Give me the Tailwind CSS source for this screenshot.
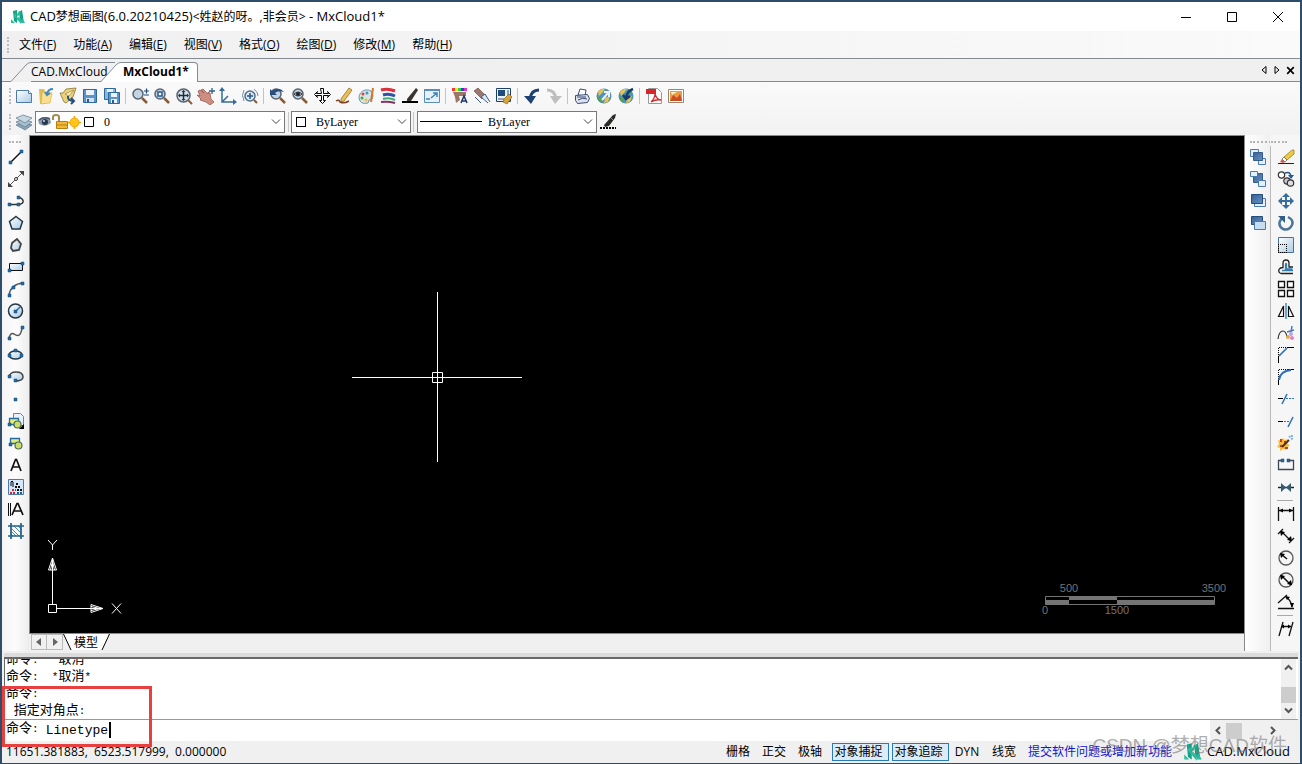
<!DOCTYPE html>
<html lang="zh-CN">
<head>
    <meta charset="UTF-8">
    <meta name="viewport" content="width=device-width, initial-scale=1.0">
    <title>CAD梦想画图 - MxCloud1</title>
    <script src="https://cdn.jsdelivr.net/npm/@tailwindcss/browser@4"></script>
</head>
<body class="h-screen flex flex-col relative overflow-hidden bg-[#f0f0f0] border-x-2 border-t-2 border-b border-[#2f4d68] font-['Open_Sans','Noto_Sans_CJK_SC',sans-serif] text-xs text-black">
    <!-- Shared gradients -->
    <svg class="absolute size-0" aria-hidden="true">
        <defs>
            <linearGradient id="sky" x1="0" y1="0" x2="1" y2="1"><stop offset="0" stop-color="#fff"/><stop offset="1" stop-color="#a9cbe6"/></linearGradient>
            <linearGradient id="navy" x1="0" y1="0" x2="1" y2="1"><stop offset="0" stop-color="#3a6095"/><stop offset="1" stop-color="#6591c4"/></linearGradient>
        </defs>
    </svg>

    <!-- Title bar -->
    <header class="h-[29px] shrink-0 bg-white flex items-center pl-2">
        <svg class="size-4 mr-1" viewBox="0 0 16 16"><path fill="#16a085" d="M3 2l4-1v13l-3-2zM9 3l3-2 2 13-4-2z"/><path fill="#2bbf9f" d="M5 4l6 7v4L4 7zM1 10l4 4H1zM9 2l-3 5 1 2 4-6zM12 9l3 5h-4z"/></svg>
        <h1 class="whitespace-pre leading-4"><span class="text-[13px]">CAD</span>梦想画图<span class="text-[13px]">(6.0.20210425)</span>&lt;姓赵的呀。,非会员&gt;<span class="text-[13px]"> - MxCloud1*</span></h1>
        <div class="ml-auto flex -mr-px">
            <button aria-label="最小化" class="w-[46px] h-7 flex items-center justify-center"><svg class="size-3" viewBox="0 0 12 12"><path stroke="#000" d="M1 6.500h10"/></svg></button>
            <button aria-label="最大化" class="w-[46px] h-7 flex items-center justify-center"><svg class="size-3" viewBox="0 0 12 12"><path fill="none" stroke="#000" d="M1.500 1.500h9v9h-9z"/></svg></button>
            <button aria-label="关闭" class="w-[46px] h-7 flex items-center justify-center"><svg class="size-3" viewBox="0 0 12 12"><path stroke="#000" d="M1 1l10 10M11 1L1 11"/></svg></button>
        </div>
    </header>

    <!-- Menu -->
    <nav class="h-7 shrink-0 flex items-center gap-[17px] pl-[5px] bg-linear-to-r from-[#f0f0f0] to-[#fafafa] border-b border-[#848b93]">
        <span class="h-4 border-l-2 border-dotted border-[#bdbdbd] -mr-[7px]"></span>
        <button>文件(<u>F</u>)</button>
        <button>功能(<u>A</u>)</button>
        <button>编辑(<u>E</u>)</button>
        <button>视图(<u>V</u>)</button>
        <button>格式(<u>O</u>)</button>
        <button>绘图(<u>D</u>)</button>
        <button>修改(<u>M</u>)</button>
        <button>帮助(<u>H</u>)</button>
    </nav>

    <!-- Document tabs -->
    <div class="h-[23px] shrink-0 flex items-end" role="tablist">
        <span class="w-[9px] border-b border-[#848b93]"></span>
        <button role="tab" class="flex h-5">
            <svg class="w-5 h-5" viewBox="0 0 20 20"><path fill="none" stroke="#848b93" d="M0 19.500L15 3Q17 .5 20 .5"/></svg>
            <span class="h-5 w-[84px] text-left whitespace-nowrap leading-[18px] border-y border-[#848b93]">CAD.MxCloud</span>
        </button>
        <button role="tab" aria-selected="true" class="flex h-5 -ml-[14px] relative">
            <svg class="w-5 h-5" viewBox="0 0 20 20"><path fill="#fff" d="M0 20L15 3Q17 .5 20 .5V20z"/><path fill="none" stroke="#848b93" d="M0 19.500L15 3Q17 .5 20 .5"/></svg>
            <span class="h-5 w-[77px] pl-[2px] text-left whitespace-nowrap leading-[18px] font-bold bg-white border-t border-r rounded-tr-sm border-[#848b93]">MxCloud1*</span>
        </button>
        <div class="flex-1 h-full border-b border-[#848b93] flex items-center justify-end gap-[3px] pr-1">
            <button aria-label="上一个"><svg class="size-[10px]" viewBox="0 0 10 10"><path fill="none" stroke="#000" d="M7 1.500v7L3 5z"/></svg></button>
            <button aria-label="下一个"><svg class="size-[10px]" viewBox="0 0 10 10"><path fill="none" stroke="#000" d="M3 1.500v7L7 5z"/></svg></button>
            <button aria-label="关闭文档"><svg class="size-[11px]" viewBox="0 0 10 10"><path stroke="#000" stroke-width="1.500" d="M2 2l6 6M8 2L2 8"/></svg></button>
        </div>
    </div>

    <!-- Toolbars -->
    <div class="shrink-0 bg-linear-to-b from-[#fafafa] to-[#f2f2f2] pl-[7px] pt-[2px]">
        <div class="flex items-center h-6 pb-px">
            <span class="h-4 border-l-2 border-dotted border-[#bdbdbd] mr-[2px]"></span>
            <div id="mainTools" class="flex items-center"></div>
        </div>
        <div class="flex items-center h-[27px]">
            <span class="h-4 border-l-2 border-dotted border-[#bdbdbd] mr-[2px]"></span>
            <div id="layerTools" class="flex"></div>
            <div class="flex items-center h-[22px] w-[250px] bg-white border border-[#7a7a7a] pl-[2px] pr-[3px]">
                <svg class="w-[61px] h-4 mr-[5px]" viewBox="0 0 61 16">
                    <path fill="#8b9ba8" d="M0 6q5-5 12-2l1 5q-6 5-12 1z"/><circle cx="7" cy="8" r="3" fill="#25394b"/><circle cx="6" cy="7" r="1" fill="#cde"/><path d="M1 6q5-4 11-1" fill="none" stroke="#455868" stroke-width="1.500"/>
                    <path d="M15 6V3q0-2 3-2t3 2v5" fill="none" stroke="#a5894e" stroke-width="2"/><path fill="#f2b733" stroke="#b97d13" d="M18.500 7.500h11v7h-11z"/><path stroke="#b97d13" d="M19 11h10"/>
                    <circle cx="36.500" cy="8.500" r="4.500" fill="#ffc61a" stroke="#f2a20c"/><path stroke="#f2a20c" stroke-width="1.500" d="M36.500 2v2M36.500 13v2M30 8.500h2M41 8.500h2"/>
                    <path fill="#fff" stroke="#000" d="M46.500 3.500h9v9h-9z"/>
                </svg>
                <select aria-label="图层" class="flex-1 appearance-none outline-none font-['Liberation_Serif','Noto_Sans_CJK_SC',serif]"><option>0</option></select>
                <svg class="w-[10px] h-[6px]" viewBox="0 0 10 6"><path fill="none" stroke="#444" d="M1 .5l4 4 4-4"/></svg>
            </div>
            <span class="w-px h-5 bg-[#c8c8c8] ml-[3px] mr-[2px]"></span>
            <div class="flex items-center h-[22px] w-[120px] bg-white border border-[#7a7a7a] pl-1 pr-[3px]">
                <span class="size-[10px] border border-black mr-[10px]"></span>
                <select aria-label="颜色" class="flex-1 appearance-none outline-none font-['Liberation_Serif','Noto_Sans_CJK_SC',serif]"><option>ByLayer</option></select>
                <svg class="w-[10px] h-[6px]" viewBox="0 0 10 6"><path fill="none" stroke="#444" d="M1 .5l4 4 4-4"/></svg>
            </div>
            <span class="w-px h-5 bg-[#c8c8c8] ml-[2px] mr-[3px]"></span>
            <div class="flex items-center h-[22px] w-[180px] bg-white border border-[#7a7a7a] pl-[2px] pr-[3px]">
                <span class="w-[62px] h-px bg-black mr-[6px]"></span>
                <select aria-label="线型" class="flex-1 appearance-none outline-none font-['Liberation_Serif','Noto_Sans_CJK_SC',serif]"><option>ByLayer</option></select>
                <svg class="w-[10px] h-[6px]" viewBox="0 0 10 6"><path fill="none" stroke="#444" d="M1 .5l4 4 4-4"/></svg>
            </div>
            <div id="styleTools" class="flex"></div>
        </div>
    </div>

    <!-- Workspace -->
    <div class="flex-1 min-h-0 flex">
        <div class="w-[27px] shrink-0 pl-[3px] pt-[6px] bg-linear-to-r from-[#f4f4f4] via-[#fcfcfc] to-[#ededed]">
            <span class="block w-3 ml-1 border-t-2 border-dotted border-[#b5b5b5] mb-[3px]"></span>
            <div id="drawTools"></div>
        </div>
        <div class="flex-1 min-w-0 flex flex-col">
            <main class="flex-1 relative bg-black border-y border-l border-[#8a8a8a] overflow-hidden">
                <svg class="absolute left-[322px] top-[156px] size-[170px]" viewBox="0 0 170 170"><path fill="none" stroke="#fff" d="M0 85.500h170M85.500 0v170M80.500 80.500h10v10h-10z"/></svg>
                <svg class="absolute left-[14px] bottom-[19px] w-20 h-[76px]" viewBox="0 0 80 76" fill="none" stroke="#fff">
                    <path d="M4.500 66.500h8v8h-8zM8.500 66V20M13 70.500h46M8.500 20l-4 12h8zM8.500 23l-2 9M8.500 23l2 9M59 70.500l-12-4v8zM56 70.500l-9-2M56 70.500l-9 2"/>
                    <path d="M4 2l4.500 5L13 2M8.500 7v5M68 65.500l9 10M77 65.500l-9 10"/>
                </svg>
                <svg class="absolute right-[18px] bottom-4 w-[186px] h-9 text-[11px] font-['Liberation_Sans',sans-serif]" viewBox="0 0 186 36" fill="#747474" text-anchor="middle">
                    <path fill="none" stroke="#747474" d="M5.500 15.500h169v8h-169z"/><path d="M5 19h24v4H5zM29 15h48v4H29zM77 19h98v4H77z"/>
                    <text x="29" y="11">500</text><text x="174" y="11">3500</text><text x="5" y="33">0</text><text x="77" y="33">1500</text>
                </svg>
            </main>
            <div class="h-[17px] shrink-0 flex text-[12px] leading-[17px]">
                <button aria-label="左移" class="w-4 h-4 border border-[#bbb] flex items-center justify-center ml-[2px]"><svg class="size-2" viewBox="0 0 8 8"><path fill="#666" d="M6 0v8L1 4z"/></svg></button>
                <button aria-label="右移" class="w-4 h-4 border border-l-0 border-[#bbb] flex items-center justify-center"><svg class="size-2" viewBox="0 0 8 8"><path fill="#666" d="M2 0v8l5-4z"/></svg></button>
                <button class="flex h-4"><svg class="w-[11px] h-4" viewBox="0 0 11 16"><path fill="#fff" d="M0 0h11v16H8z"/><path stroke="#000" d="M.5 0L8 16"/></svg><span class="bg-white">模型</span><svg class="w-3 h-4" viewBox="0 0 12 16"><path fill="#fff" d="M0 0h12L4 16H0z"/><path stroke="#000" d="M11.500 0L4 16"/></svg></button>
            </div>
        </div>
        <div class="w-[26px] shrink-0 pt-[6px] flex flex-col items-center border-l border-[#8a8a8a] bg-linear-to-r from-white to-[#f0f0f0]">
            <span class="w-full border-t-2 border-dotted border-[#b5b5b5] ml-[10px] mb-[3px]"></span>
            <div id="orderTools"></div>
        </div>
        <div class="w-[30px] shrink-0 pt-[6px] flex flex-col items-center bg-[#f6f6f6]">
            <span class="w-4 mr-3 border-t-2 border-dotted border-[#b5b5b5] mb-[3px]"></span>
            <div id="modifyTools" class="flex-1 w-full pl-1 border-l border-[#bbb]"></div>
        </div>
    </div>

    <!-- Command history and prompt -->
    <section class="shrink-0 mt-[2px] mx-[2px] border-t-4 border-t-[#dcdcdc] font-['Liberation_Mono','Noto_Sans_CJK_SC',monospace] text-[13px] relative">
        <div class="flex h-[62px] border-t-2 border-l border-[#686868] bg-white">
            <div class="flex-1 overflow-hidden flex flex-col justify-end pl-px leading-[17px] whitespace-pre">
                <p class="h-[17px] shrink-0">命令<span class="text-[11px]">:  *</span>取消<span class="text-[11px]">*</span></p>
                <p class="h-[17px] shrink-0">命令<span class="text-[11px]">:  *</span>取消<span class="text-[11px]">*</span></p>
                <p class="h-[17px] shrink-0">命令<span class="text-[11px]">:</span></p>
                <p class="h-[17px] shrink-0"> 指定对角点<span class="text-[11px]">:</span></p>
            </div>
            <div class="w-[15px] bg-[#f0f0f0] flex flex-col items-center justify-between py-[5px] mr-[2px]">
                <svg class="w-[9px] h-[7px]" viewBox="0 0 9 7"><path fill="none" stroke="#555" stroke-width="2" d="M1 5.500L4.500 2 8 5.500"/></svg>
                <span class="w-full h-4 bg-[#cdcdcd] mt-3"></span>
                <svg class="w-[9px] h-[7px]" viewBox="0 0 9 7"><path fill="none" stroke="#555" stroke-width="2" d="M1 1.500L4.500 5 8 1.500"/></svg>
            </div>
        </div>
        <div class="flex h-[22px] border-t border-l border-[#9a9a9a] bg-white">
            <label for="command" class="pl-px leading-[17px]">命令<span class="text-[11px]">:</span></label>
            <input id="command" type="text" value="Linetype" class="field-sizing-content ml-[7px] outline-none text-[13px] leading-[19px]">
            <span class="w-[2px] h-4 mt-[2px] ml-px bg-black"></span>
            <div class="ml-auto w-[71px] flex items-center justify-between bg-[#f0f0f0] px-[5px]">
                <svg class="w-[6px] h-[9px]" viewBox="0 0 6 9"><path fill="none" stroke="#555" stroke-width="2" d="M5 1L1.500 4.500 5 8"/></svg>
                <span class="w-4 h-4 bg-[#cdcdcd] mr-6"></span>
                <svg class="w-[6px] h-[9px]" viewBox="0 0 6 9"><path fill="none" stroke="#555" stroke-width="2" d="M1 1l3.500 3.500L1 8"/></svg>
            </div>
            <span class="w-[17px] bg-[#f0f0f0]"></span>
        </div>
        <!-- Highlight frame -->
        <div class="absolute -left-[2px] top-[29px] w-[150px] h-[61px] border-3 border-[#e8403e] pointer-events-none"></div>
    </section>

    <!-- Status bar -->
    <footer class="h-[22px] shrink-0 flex items-center pl-1 pr-[10px] whitespace-nowrap">
        <output class="whitespace-pre">11651.381883,  6523.517999,  0.000000</output>
        <div class="ml-auto flex items-center">
            <button class="w-9">栅格</button>
            <button class="w-9">正交</button>
            <button class="w-9">极轴</button>
            <button aria-pressed="true" class="w-[57px] h-[18px] leading-[16px] pr-1 ml-1 border border-[#2a7ab8] bg-[#dcebf8]">对象捕捉</button>
            <button aria-pressed="true" class="w-[57px] h-[18px] leading-[16px] pr-1 ml-[3px] border border-[#2a7ab8] bg-[#dcebf8]">对象追踪</button>
            <button class="w-9">DYN</button>
            <button class="w-9 ml-px">线宽</button>
            <a href="#" class="ml-[6px] text-[#1414d2]">提交软件问题或增加新功能</a>
            <svg class="size-5 ml-[11px] mr-1" viewBox="0 0 16 16"><path fill="#16a085" d="M3 2l4-1v13l-3-2zM9 3l3-2 2 13-4-2z"/><path fill="#2bbf9f" d="M5 4l6 7v4L4 7zM1 10l4 4H1zM9 2l-3 5 1 2 4-6zM12 9l3 5h-4z"/></svg>
            <span class="text-[13px]">CAD.MxCloud</span>
        </div>
    </footer>
    <p class="absolute right-[13px] bottom-1 text-[19px] leading-[26px] text-[#777]/60 whitespace-nowrap pointer-events-none font-['Liberation_Sans','Noto_Sans_CJK_SC',sans-serif]">CSDN @梦想CAD软件</p>

    <script>
        // Each entry is [title, svg body on an 18x18 grid]; null draws a separator
        const lens = '<circle cx="7" cy="7" r="5" fill="#c3d5e4" stroke="#566473" stroke-width="1.500"/><path stroke="#8a5a33" stroke-width="2.500" d="M11 11l5 5"/>';
        const globe = '<circle cx="9" cy="9" r="7.500" fill="#4e94b8"/><path fill="#e6c34d" d="M3 5q3-4 7-3l-3 4-3 3zM10 11l5-2-2 6-4 1z"/><path fill="#5a9c55" d="M2 9l4 2 1 5q-4-1-5-7zM11 2l4 3-3 2z"/>';
        const floppy = '<path fill="#5c93c8" stroke="#2f689f" d="M2.500 2.500h13v13h-13z"/><path fill="#eaf3fb" d="M5 3h8v5H5z"/><path fill="#d2e1ee" d="M5 11h8v4H5z"/><path fill="#285a90" d="M6 12h2v3H6z"/>';

        const mainTools = [
            ["新建", '<path fill="url(#sky)" stroke="#4d7ba6" d="M1.500 3.500h12l3 3v9h-15z"/><path fill="#fff" stroke="#4d7ba6" d="M13.500 3.500v3h3"/>'],
            ["打开", '<path fill="#e2bd55" d="M2 2h5l1 2v13H3z"/><path fill="#f9df8e" stroke="#d1a63f" stroke-width=".6" d="M5 5l10 1-2 10-9 1z"/><path fill="none" stroke="#4389bd" stroke-width="2" d="M16 2q-5 0-6 5M8 5l2 3 3-2"/>'],
            ["打开云图", '<path fill="#ecd17b" stroke="#8b7433" stroke-width=".8" d="M1 6h3l3-4 10-1-3 9-7 6-2-1z"/><path fill="#fff3c4" stroke="#8b7433" stroke-width=".6" d="M6 7l9-4-5 6z"/><path fill="none" stroke="#244f79" stroke-width="2" d="M9 9q-1 5 6 5M12 11l3 3-3 3"/>'],
            ["保存", floppy],
            ["另存为", '<path fill="#8ab5dc" stroke="#2f689f" d="M1.500 1.500h11v11h-11z"/><path fill="#eaf3fb" d="M4 2h6v3H4z"/><path fill="#5c93c8" stroke="#2f689f" d="M5.500 5.500h11v11h-11z"/><path fill="#eaf3fb" d="M8 6h6v4H8zM8 12h6v4H8z"/><path fill="#285a90" d="M9 13h2v3H9z"/>'],
            null,
            ["缩放", lens + '<path stroke="#1e4b78" stroke-width="1.200" d="M13 4h5M15.500 1.500v5M13 8h5"/>'],
            ["窗口缩放", lens + '<path fill="#fff" stroke="#27588b" stroke-width="1.500" d="M5 5h4v4H5z"/>'],
            ["范围缩放", '<circle cx="8.500" cy="8.500" r="6.500" fill="#d5e1ea" stroke="#566473" stroke-width="1.500"/><path stroke="#8a5a33" stroke-width="2" d="M13 13l4 4"/><path stroke="#1d2d3c" stroke-width="1.500" d="M4 8.500h9M8.500 4v9"/><path fill="#1d2d3c" d="M3 8.500l2-2v4zM14 8.500l-2-2v4zM8.500 3l-2 2h4zM8.500 14l-2-2h4z"/>'],
            ["平移", '<path fill="#cf8d82" stroke="#8b5148" stroke-width=".7" d="M1 4l2-1 4 3-3-3 2-1 5 5 0-2 2 1 1 6 3 3-4 3-4-3-6-2 1-1-4-4 3 1z"/><path stroke="#2d5e8d" stroke-width="1.300" d="M12 4h6M15 1v6"/>'],
            ["坐标系", '<path fill="none" stroke="#396b98" stroke-width="1.500" d="M3 2v13h13M3 15l6-6"/><path fill="#396b98" d="M3 0l3 4H0zM18 15l-4-3v6z"/>'],
            ["实时缩放", '<circle cx="9" cy="9" r="5" fill="#dce9f3" stroke="#4c6f90" stroke-width="1.500"/><path stroke="#27588b" stroke-width="1.500" d="M6 9h6M9 6v6"/><path fill="none" stroke="#7291aa" d="M3 3q-3 5 0 11M13 2q4 3 4 7"/><path stroke="#8a5a33" stroke-width="2" d="M13 13l3 3"/>'],
            null,
            ["上一视图", lens + '<path fill="#294e7d" d="M1 8V2l2 2q7-5 12 1-6-2-9 1l2 2z"/>'],
            ["全部显示", lens + '<circle cx="7" cy="7" r="2" fill="#222"/><path stroke="#333" fill="none" d="M3 7q4-4 8 0-4 4-8 0"/>'],
            ["移动视图", '<path fill="#fff" stroke="#000" d="M7.500 1.500h3v5h5l-1-2 3 3-3 3 1-2h-5v5h2l-3 3-3-3h2v-5h-5l1 2-3-3 3-3-1 2h5z"/>'],
            ["画笔", '<path fill="#edc158" stroke="#966a22" stroke-width=".8" d="M6 12L14 1l3 2-8 11-3 1z"/><path fill="none" stroke="#7b4225" stroke-width="1.500" d="M1 14q3-2 4 1 4 2 9-1"/>'],
            ["调色板", '<path fill="#d9e4e6" stroke="#6b96ae" d="M8 3q8-1 8 6 0 4-4 4l-1 3q-8 2-9-5 0-6 6-8z"/><circle cx="6" cy="7" r="1.500" fill="#d44"/><circle cx="10" cy="6" r="1.500" fill="#49b"/><circle cx="5" cy="11" r="1.500" fill="#4a4"/><circle cx="9" cy="13" r="1.500" fill="#eb3"/><path stroke="#cf7a2b" stroke-width="2" d="M16 1l-2 14"/>'],
            ["图层颜色", '<path stroke="#d7323c" stroke-width="3" d="M2 3q7-2 14 1" fill="none"/><path stroke="#3151a8" stroke-width="3" d="M4 8q6-2 12 1" fill="none"/><path stroke="#3fac7b" stroke-width="2" d="M4 12q6-2 12 1" fill="none"/><path stroke="#8b315f" stroke-width="2" d="M2 15q7-1 14 1" fill="none"/>'],
            ["线宽", '<path fill="#3b332d" d="M6 12L15 1l2 2-7 11-4 2z"/><path stroke="#000" stroke-width="2" d="M1 15h16"/>'],
            ["外部参照", '<path fill="#e7f1fa" stroke="#5a8dbd" d="M1.500 2.500h15v13h-15z"/><path fill="#5a8dbd" d="M1 2h16v2H1z"/><path fill="none" stroke="#3d83bd" stroke-width="1.500" d="M8 11l6-5M10 6h4v4M3 12h4"/>'],
            null,
            ["文字样式", '<path fill="#f33" d="M1 1h3v3H1z"/><path fill="#ee2" d="M4 1h3v3H4z"/><path fill="#3c4" d="M7 1h3v3H7z"/><path fill="#24d" d="M10 1h3v3h-3z"/><path fill="#d3c" d="M13 1h3v3h-3z"/><path fill="#9d7667" d="M2 5h13v4H8l1 4-4 3-1-6z"/><path fill="none" stroke="#1c3864" stroke-width="1.500" d="M10 16l3-7 3 7M11 14h4"/>'],
            ["格式刷", '<path fill="#9c7770" stroke="#6b4a46" stroke-width=".7" d="M1 4l4-3 7 7-3 4z"/><path fill="#dce5ef" stroke="#3a5e85" d="M8 10l4-3 5 8M8 10l7 6"/><path stroke="#3a5e85" d="M2 10l6 6"/>'],
            ["特性", '<path fill="#edf3f8" stroke="#1e4068" d="M1.500 1.500h14v13h-14z"/><path fill="#204b7b" d="M3 3h7v6H3z"/><path fill="#90a6bd" d="M12 3h2v10h-2zM3 11h6v2H3z"/><path fill="#d8a338" stroke="#75521b" stroke-width=".6" d="M9 12l5-5 3 3-5 7-4-2z"/>'],
            null,
            ["撤销", '<path fill="none" stroke="#1f4170" stroke-width="3" d="M16 3Q8 3 7 12"/><path fill="#1f4170" d="M1 9h12l-5 8z"/>'],
            ["重做", '<path fill="none" stroke="#bebebe" stroke-width="3" d="M2 3q8 0 9 9"/><path fill="#bebebe" d="M17 9H5l5 8z"/>'],
            null,
            ["打印", '<path fill="#fff" stroke="#3b4c77" d="M5 8l2-6 6 1-1 6z"/><path fill="#dce1ec" stroke="#3b4c77" d="M2.500 8.500l12-1 2 4-2 4-10 1-2-3z"/><path fill="none" stroke="#3b4c77" d="M5 13q5-3 9-1M4 10h9"/>'],
            ["网上发布", globe + '<path fill="none" stroke="#eef" stroke-width="2" d="M7 13l6-7M9 5h5v5"/>'],
            ["网上打开", globe + '<path fill="none" stroke="#163d68" stroke-width="2.500" d="M16 2q-6 2-7 9M6 8l3 4 4-3"/>'],
            null,
            ["导出PDF", '<path fill="#fff" stroke="#999" d="M3.500 1.500h9l4 4v11h-13z"/><path fill="#d8262b" d="M1 2h10v5H1z"/><path fill="none" stroke="#d8262b" stroke-width="1.300" d="M6 15q4-4 4-8 2 6 6 6-5-1-10 2"/>'],
            ["导出图片", '<path fill="#fff" stroke="#9a8672" d="M1.500 2.500h15v13h-15z"/><path fill="#e99b45" d="M3 4h12v10H3z"/><path fill="#c84e22" d="M3 14l3-6 4 3 3-4 2 7z"/><path fill="#ffeebd" d="M4 5h6l-5 3z"/>']
        ];

        const layerTools = [
            ["图层管理", '<path fill="#8ba5b8" stroke="#5b788f" stroke-width=".7" d="M1 12l7-3 9 3-7 5z"/><path fill="#a9bfce" stroke="#5b788f" stroke-width=".7" d="M1 9l7-3 9 3-7 5z"/><path fill="#c5d6e2" stroke="#5b788f" stroke-width=".7" d="M1 5l7-3 9 3-7 5z"/>']
        ];

        const styleTools = [
            ["线型管理", '<path fill="#2d2a28" d="M5 12L14 2l3-1-1 4-6 8-4 1z"/><path stroke="#c77b43" d="M12 5l2 2"/><path stroke="#000" stroke-width="2" stroke-dasharray="2 1" d="M1 15h16"/>']
        ];

        const pt = (x, y) => `<path fill="#236ca6" stroke="#174a75" stroke-width=".5" d="M${x - 1} ${y - 1}h3v3h-3z"/>`;
        const drawTools = [
            ["直线", '<path stroke="#111" stroke-width="1.500" d="M3 15L15 3"/>' + pt(3, 14) + pt(14, 3)],
            ["构造线", '<path stroke="#555" d="M3 15L15 3"/><path fill="#444" d="M1 17v-5l5 5zM17 1v5l-5-5z"/><circle cx="9" cy="9" r="1.500" fill="#fff" stroke="#333"/>'],
            ["多段线", '<path fill="none" stroke="#333" stroke-width="1.500" d="M2 12.500h10q5-1 4-4-1-3-5-3"/>' + pt(2, 12) + pt(11, 12) + pt(11, 5)],
            ["正多边形", '<path fill="url(#sky)" stroke="#253644" stroke-width="1.500" d="M9 2.500l6.500 5L13 15H5L2.500 7.500z"/>'],
            ["多边形", '<path fill="url(#sky)" stroke="#444" stroke-width="1.800" d="M5 7l5-4 4 5-2 6-6 1-2-3z"/>'],
            ["矩形", '<path fill="url(#sky)" stroke="#111" d="M2.500 5.500h13v7h-13z"/>' + pt(2, 12) + pt(15, 5)],
            ["圆弧", '<path fill="none" stroke="#555" stroke-width="1.500" d="M2 15Q4 4 16 3"/>' + pt(2, 15) + pt(6, 7) + pt(15, 3)],
            ["圆", '<circle cx="8.500" cy="9" r="7" fill="url(#sky)" stroke="#253644" stroke-width="1.500"/><path stroke="#236ca6" stroke-width="1.500" d="M8 10l5-5"/>' + pt(8, 9)],
            ["样条曲线", '<path fill="none" stroke="#555" stroke-width="1.500" d="M2 15q1-7 5-5 7 5 8-7"/>' + pt(2, 14) + pt(15, 3)],
            ["椭圆", '<ellipse cx="8.500" cy="9" rx="6.500" ry="4" fill="url(#sky)" stroke="#253644" stroke-width="1.500"/>' + pt(2, 9) + pt(8, 4) + pt(14, 9)],
            ["椭圆弧", '<path fill="url(#sky)" stroke="#444" stroke-width="1.500" d="M2 9q1-5 7-5 7 0 7 5 0 4-8 4"/>' + pt(2, 8) + pt(8, 12)],
            ["点", pt(8, 9)],
            ["插入块", '<path fill="#e8f1fb" stroke="#6185b0" d="M6.500 1.500h7l3 3v9h-10z"/><path fill="#e3ec75" stroke="#236ca6" stroke-width="1.300" d="M2.500 6.500h9v6h-9z"/><circle cx="10.500" cy="12.500" r="3.500" fill="#ccdc6b" stroke="#4a6c55" stroke-width="1.200"/><path d="M17 12v5h-5z"/>' + pt(2, 12)],
            ["创建块", '<path fill="#e3ec75" stroke="#236ca6" stroke-width="1.300" d="M3.500 4.500h9v5h-9z"/><circle cx="11.500" cy="11.500" r="3.500" fill="#ccdc6b" stroke="#4a6c55" stroke-width="1.200"/>' + pt(3, 10)],
            ["单行文字", '<path fill="none" stroke="#111" stroke-width="1.700" d="M4 15L8.500 3.500h1L14 15M5.500 11h7"/>'],
            ["图案填充", '<path fill="#d6e7fa" stroke="#4b78bd" d="M1.500 1.500h15v15h-15z"/><path fill="none" stroke="#000" d="M4 8V4q1-2 2 0v5"/><path stroke="#111" stroke-width="2" stroke-dasharray="2 1" d="M9 6h2M8 9h5M10 12h5"/><path stroke="#d22" stroke-width="2" stroke-dasharray="2 1" d="M5 12h4M3 15h5"/><path stroke="#167" stroke-width="2" stroke-dasharray="2 1" d="M10 15h5"/>'],
            ["多行文字", '<path stroke="#111" d="M1.500 3v13M3.500 3v13"/><path fill="none" stroke="#111" stroke-width="1.700" d="M5 15L10 3.500h1L16 15M7 11h7"/>'],
            ["区域填充", '<path stroke="#4b8ab5" d="M4 6l8 8M4 9l5 5M7 4l8 8M11 4l4 4M4 12l2 2"/><path fill="none" stroke="#245f8b" stroke-width="1.700" d="M4 1v16M14 1v16M1 4h16M1 14h16"/>']
        ];

        const orderTools = [
            ["前置", '<path fill="#e3effa" stroke="#4c7aae" d="M1.500 1.500h8v7h-8zM9.500 10.500h7v6h-7z"/><path fill="url(#navy)" stroke="#345d8e" d="M4.500 4.500h9v8h-9z"/>'],
            ["后置", '<path fill="url(#navy)" stroke="#345d8e" d="M4.500 3.500h9v9h-9z"/><path fill="#e3effa" stroke="#4c7aae" d="M1.500 1.500h7v5h-7zM9.500 10.500h7v6h-7z"/>'],
            ["置于对象之上", '<path fill="#e3effa" stroke="#4c7aae" d="M5.500 6.500h11v8h-11z"/><path fill="url(#navy)" stroke="#234d7e" d="M2.500 2.500h11v9h-11z"/>'],
            ["置于对象之下", '<path fill="url(#navy)" stroke="#234d7e" d="M2.500 2.500h11v8h-11z"/><path fill="#c8def0" stroke="#4c7aae" d="M5.500 7.500h11v8h-11z"/>']
        ];

        const ring = '<circle cx="9" cy="9" r="7" fill="#f4f4f4" stroke="#555" stroke-width="1.300"/>';
        const modifyTools = [
            ["删除", '<path stroke="#222" d="M1 15.500h16"/><path fill="#eecb3c" stroke="#85711f" stroke-width=".7" d="M7 9l8-7h2v4l-7 6z"/><path fill="#fff" stroke="#555" stroke-width=".7" d="M5 11l2-2 3 3-2 2z"/><path fill="#d65c49" d="M5 11l3 3-2 1-3-1z"/>'],
            ["复制", '<circle cx="4.500" cy="5" r="3.200" fill="#fff" stroke="#333" stroke-width="1.200"/><circle cx="10" cy="11" r="3.200" fill="#ccd" stroke="#333" stroke-width="1.200"/><circle cx="13.500" cy="13" r="3.200" fill="#ddd" stroke="#333" stroke-width="1.200"/><path fill="none" stroke="#205b8e" stroke-width="1.500" d="M8 3q5-2 6 3"/><path fill="#205b8e" d="M11 5h6l-3 4z"/>'],
            ["移动", '<path stroke="#396d9d" stroke-width="2" d="M3 9h12M9 3v12"/><path fill="#396d9d" d="M1 9l4-4v8zM17 9l-4-4v8zM9 1L5 5h8zM9 17l-4-4h8z"/>'],
            ["旋转", '<path fill="none" stroke="#4c7599" stroke-width="2.500" d="M11 3q6 3 4 8-3 6-9 4-5-3-3-8l2-3"/><path fill="#315c86" d="M1 2h7v7z"/>'],
            ["缩放对象", '<path fill="url(#sky)" stroke="#4570a4" d="M1.500 1.500h15v15h-15z"/><path fill="none" stroke="#000" stroke-dasharray="1 1" d="M1 8.500h9M9.500 8v9M1.500 8v9M1 16.500h9"/>'],
            ["偏移", '<path fill="none" stroke="#222" stroke-width="1.300" d="M16 15.500H4q-3-1-2-4 1-2 4-2V5q0-3 3-3t3 3v4h4"/><path fill="none" stroke="#347eb3" stroke-width="1.300" d="M16 12.500H5M8.500 12V6q.5-1 1 0v5h6"/>'],
            ["阵列", '<path fill="#fff" stroke="#111" stroke-width="1.300" d="M1.500 1.500h6v6h-6zM10.500 1.500h6v6h-6zM1.500 10.500h6v6h-6zM10.500 10.500h6v6h-6z"/>'],
            ["镜像", '<path fill="#fff" stroke="#111" stroke-width="1.200" d="M6.500 4v10.500h-5zM11.500 4v10.500h5z"/><path stroke="#247ebd" stroke-width="1.300" d="M9 1v16"/>'],
            ["曲线编辑", '<path fill="none" stroke="#333" stroke-width="1.200" d="M1 15q1-8 5-8 3 0 4 6"/><path stroke="#477cba" stroke-width="1.500" d="M10 8l7-2M15 2l-1 6"/><circle cx="11" cy="13" r="2" fill="#dcae43"/><circle cx="14" cy="10" r="2" fill="#b9a5db"/><circle cx="15" cy="14" r="2" fill="#e77cc8"/>'],
            ["倒角", '<path stroke="#000" stroke-dasharray="1 1" d="M1.500 2v9M2 1.500h8"/><path fill="none" stroke="#000" d="M1.500 11v6M10 1.500h7"/><path stroke="#2e70bb" stroke-width="1.700" d="M2 10l8-8"/>'],
            ["圆角", '<path stroke="#000" stroke-dasharray="1 1" d="M1.500 2v9M2 1.500h8"/><path fill="none" stroke="#000" d="M1.500 11v6M10 1.500h7"/><path fill="none" stroke="#2e70bb" stroke-width="2" d="M2 12q1-9 12-10"/>'],
            ["修剪", '<path stroke="#000" d="M1 8.500h5"/><path stroke="#2e70bb" stroke-dasharray="2 1" d="M9 8.500h8"/><path stroke="#2e70bb" stroke-width="1.500" d="M5 14l5-10"/>'],
            ["延伸", '<path stroke="#000" d="M1 9.500h5"/><path stroke="#2e70bb" stroke-dasharray="2 1" d="M7 9.500h6"/><path stroke="#2e70bb" stroke-width="1.500" d="M11 15l5-10"/>'],
            ["分解", '<path fill="#f5bb3d" d="M1 6l3 1 1-3 3 2 3-1-1 4 3 3-3 1-1 3-3-1-3 2v-3l-3-1 2-3z"/><path fill="#cb3b27" d="M3 5h2v3H3zM7 7h2v3H7zM3 11h3v2H3zM8 13h3v2H8z"/><path stroke="#44342b" stroke-width="2" d="M5 13l7-7"/><path stroke="#8ab5d6" stroke-width="2" stroke-dasharray="2 1" d="M12 2l4 4M15 1v6"/>'],
            ["打断", '<path fill="none" stroke="#3c4856" stroke-width="1.300" d="M5 4.500H1.500v9h15v-9H12"/>' + pt(5, 4) + pt(11, 4)],
            ["合并", '<path stroke="#222" stroke-width="1.500" d="M1 9.500h16"/><path fill="#315c76" d="M4 5l5 4.500L4 14zM14 5L9 9.500l5 4.500z"/>'],
            null,
            ["线性标注", '<path stroke="#111" stroke-width="1.300" d="M1.500 2v14M16.500 2v14M2 5.500h14"/><path d="M2 5.500l4-2v4zM16 5.500l-4-2v4z"/>'],
            ["对齐标注", '<path stroke="#111" stroke-width="1.300" d="M1 7l5-5M12 16l5-5M4 4l10 10"/><path d="M3 4l5 1-4 4zM15 14l-5-1 4-4z"/>'],
            ["半径标注", ring + '<path stroke="#111" stroke-width="1.500" d="M4 5l6 5"/><path d="M3 4l5 1-4 4z"/>'],
            ["直径标注", ring + '<path stroke="#111" stroke-width="1.500" d="M4 4l10 10"/><path d="M3 4l5 1-4 4zM15 14l-5-1 4-4z"/>'],
            ["角度标注", '<path fill="none" stroke="#111" stroke-width="1.300" d="M1 10l9-8M1 15.500h16M9 4q5 3 6 10"/><path d="M8 3l5 1-3 3zM15 15l-2-5h4z"/>'],
            null,
            ["标注编辑", '<path fill="none" stroke="#111" stroke-width="1.300" d="M6 2L2 16M16 2l-4 14M5 6.500h9"/><path d="M4 6.500l3-2v4zM14 6.500l-3-2v4z"/>']
        ];

        function fillToolbar(id, tools, vertical) {
            const separator = vertical
                ? '<span class="block w-4 h-px bg-[#aaa] mt-[2px] mb-[2px] ml-[2px]"></span>'
                : '<span class="w-px h-4 bg-[#c4c4c4] ml-[2px] mr-[3px]"></span>';
            document.getElementById(id).innerHTML = tools.map(tool => tool === null ? separator : `
                <button title="${tool[0]}" aria-label="${tool[0]}" class="size-[22px] flex items-center justify-center hover:bg-[#d8e8f6]">
                    <svg class="size-[18px]" viewBox="0 0 18 18">${tool[1]}</svg>
                </button>`).join("");
        }

        fillToolbar("mainTools", mainTools, false);
        fillToolbar("layerTools", layerTools, false);
        fillToolbar("styleTools", styleTools, false);
        fillToolbar("drawTools", drawTools, true);
        fillToolbar("orderTools", orderTools, true);
        fillToolbar("modifyTools", modifyTools, true);
    </script>
</body>
</html>
